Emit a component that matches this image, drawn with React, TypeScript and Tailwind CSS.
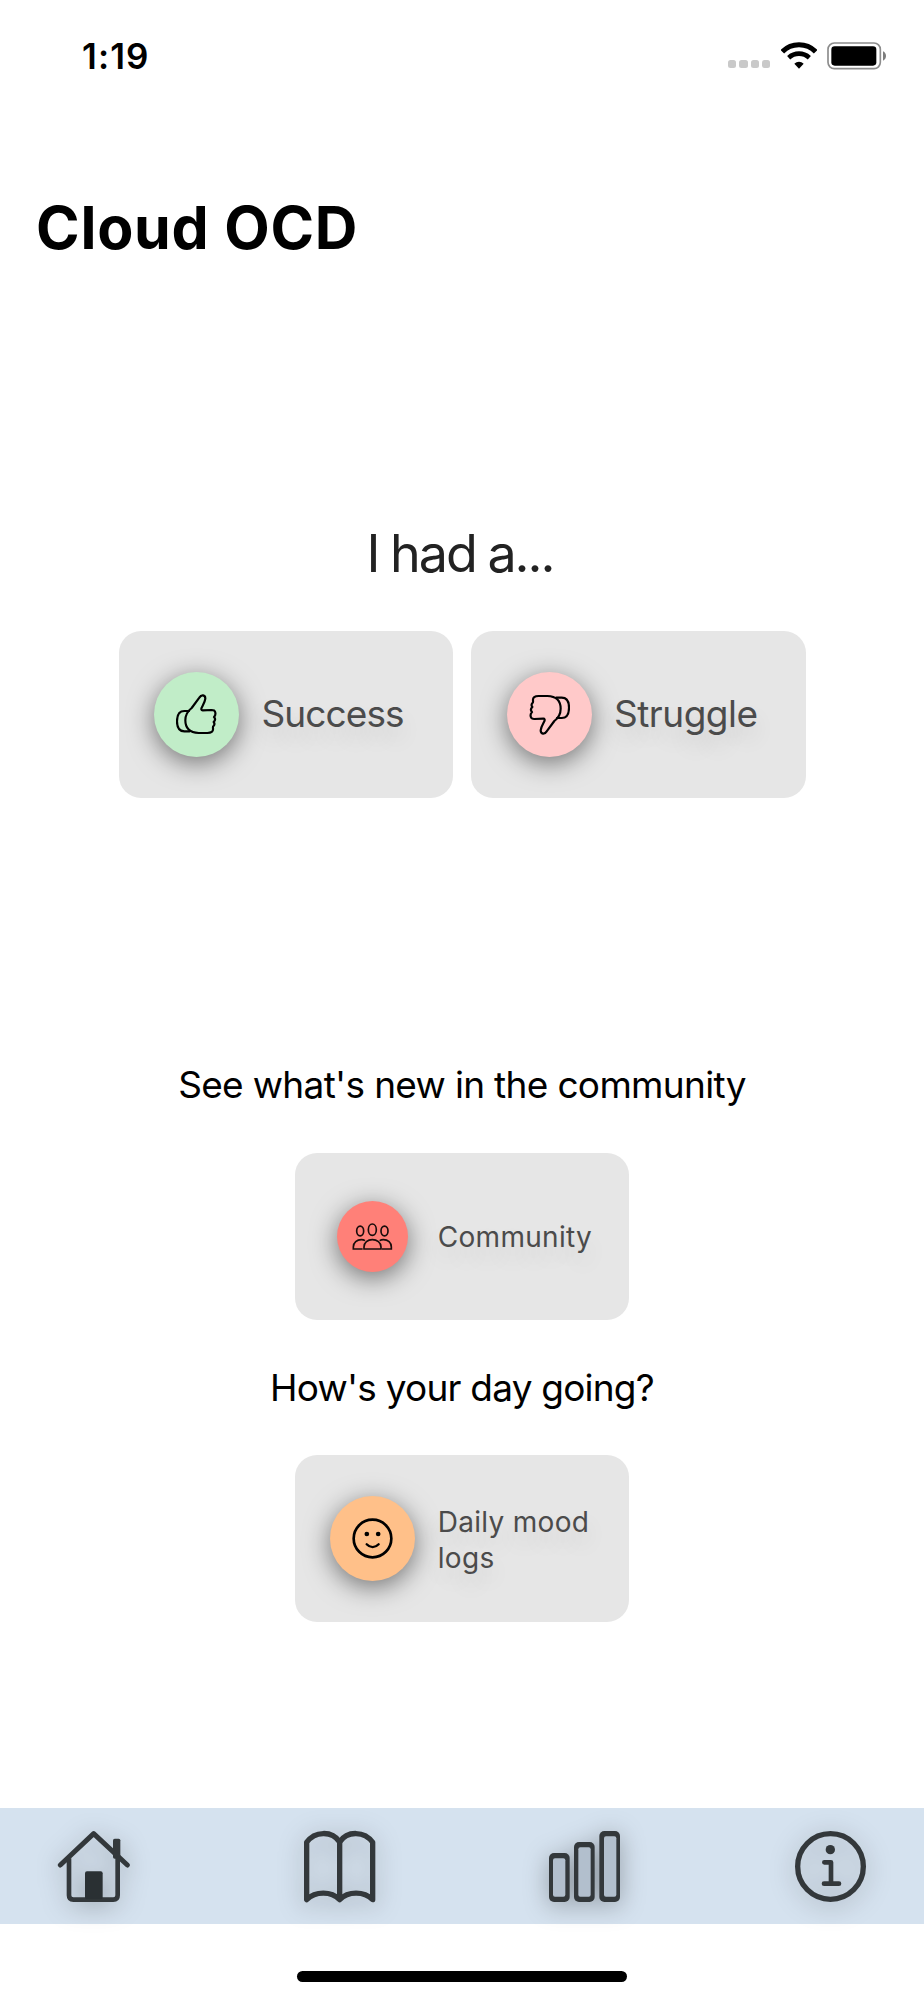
import type { ReactNode } from 'react';

const SignalDots = () => (
  <div className="flex gap-[3px] pt-[17px]">
    {[0, 1, 2, 3].map((dot) => (
      <span key={dot} className="h-[8px] w-[8.2px] rounded-[2.5px] bg-[#c9c9c9]" />
    ))}
  </div>
);

const WifiIcon = () => (
  <svg className="ml-[11px] h-[27px] w-[36px]" viewBox="0 0 108 81" fill="none">
    <path d="M4 29 C31 1 77 1 104 29" stroke="#000" strokeWidth="15" />
    <path d="M23 47 C41 31 67 31 85 47" stroke="#000" strokeWidth="14" />
    <path d="M54 80 L40 65 C48 57 60 57 68 65 Z" fill="#000" />
  </svg>
);

const BatteryIcon = () => (
  <svg className="ml-[10px] h-[28px] w-[60px]" viewBox="0 0 180 84">
    <rect x="3" y="3" width="157" height="77" rx="19" fill="none" stroke="#8c8c8c" strokeWidth="5" />
    <rect x="13" y="13" width="135" height="58" rx="10" fill="#000" />
    <path d="M168 28 C180 33 180 51 168 56 Z" fill="#7d7d7d" />
  </svg>
);

const ThumbIcon = ({ down = false }: { down?: boolean }) => (
  <svg
    className={down ? 'h-[41px] w-[41px] rotate-180' : 'h-[41px] w-[41px]'}
    viewBox="0 0 123 123"
    fill="none"
    stroke="#000"
    strokeWidth="6.5"
    strokeLinejoin="round"
    strokeLinecap="round"
  >
    <path d="M70 11 L47 42 C34 52 28 64 28 79 C28 103 41 116 68 117 L94 117 C106 117 112 113 111 104 C111 101 110 99 112 97 C116 93 116 88 113 84 C118 79 118 73 114 69 C119 64 119 58 117 53 C116 49 112 48 107 48 L80 49 C76 49 75 46 77 41 C81 33 87 24 88 14 C88 2 76 1 70 11 Z" />
    <path d="M39 51 L25 51 C11 51 3 63 3 82 C3 101 11 112 25 112 L41 112" />
  </svg>
);

const PeopleIcon = () => (
  <svg className="h-[27px] w-[41px]" viewBox="0 0 123 81" fill="none" stroke="#1a0d0c" strokeWidth="5">
    <ellipse cx="61" cy="20" rx="12" ry="17" />
    <ellipse cx="24.5" cy="24" rx="10.5" ry="14.5" />
    <ellipse cx="97.5" cy="24" rx="10.5" ry="14.5" />
    <path d="M36 78 V72 C36 59 47 50 61 50 C75 50 87 59 87 72 V78 Z" />
    <path d="M32 78 H4 V72 C4 59 15 50 28 50 C32 50 36 51 39 53" />
    <path d="M90 78 H118 V72 C118 59 108 50 94 50 C90 50 86 51 83 53" />
  </svg>
);

const SmileIcon = () => (
  <svg className="h-[41px] w-[41px]" viewBox="0 0 123 123" fill="none">
    <circle cx="61.5" cy="61.5" r="56.5" stroke="#000" strokeWidth="8" />
    <circle cx="44.5" cy="48" r="7" fill="#000" />
    <circle cx="78.5" cy="48" r="7" fill="#000" />
    <path d="M44 79 C54 90 70 90 80 79" stroke="#000" strokeWidth="7" strokeLinecap="round" />
  </svg>
);

const HomeIcon = () => (
  <svg className="h-[71px] w-[72px] overflow-visible" viewBox="0 0 216 213" fill="none" stroke="#33383b">
    <rect x="165" y="23" width="22" height="60" rx="5" fill="#33383b" stroke="none" />
    <path d="M7 102 L107 8 L208 102" strokeWidth="15" strokeLinecap="round" strokeLinejoin="round" />
    <path d="M33 82 V193 Q33 206 46 206 H166 Q179 206 179 193 V76" strokeWidth="14" />
    <rect x="81" y="121" width="53" height="84" rx="6" fill="#2a3033" stroke="none" />
  </svg>
);

const BookIcon = () => (
  <svg
    className="h-[71px] w-[72px] overflow-visible"
    viewBox="0 0 216 213"
    fill="none"
    stroke="#33383b"
    strokeWidth="16"
    strokeLinejoin="round"
  >
    <path d="M8 206 V34 C32 0 84 -2 107 33 C130 -2 182 0 206 34 V206 C180 180 132 180 107 206 C82 180 34 180 8 206 Z" />
    <path d="M107 33 V206" />
  </svg>
);

const BarsIcon = () => (
  <svg className="h-[71px] w-[72px] overflow-visible" viewBox="0 0 216 213" fill="#33383b">
    <rect x="0" y="66" width="62" height="147" rx="15" />
    <rect x="75" y="33" width="62" height="180" rx="15" />
    <rect x="151" y="0" width="62" height="213" rx="15" />
    <g fill="#b2bfcd">
      <rect x="12" y="82" width="37" height="115" rx="6" />
      <rect x="88" y="49" width="37" height="148" rx="6" />
      <rect x="165" y="16" width="37" height="181" rx="6" />
    </g>
  </svg>
);

const InfoIcon = () => (
  <svg className="h-[71px] w-[72px] overflow-visible" viewBox="0 0 216 213" fill="none" stroke="#33383b">
    <circle cx="106.5" cy="106.5" r="98.5" strokeWidth="16" />
    <circle cx="106" cy="56" r="14" fill="#33383b" stroke="none" />
    <path d="M88 94 H108 V157 M87 158 H132" strokeWidth="14" strokeLinecap="round" strokeLinejoin="round" />
  </svg>
);

type CardProps = {
  label: string;
  icon: ReactNode;
  circleClass: string;
  labelClass: string;
};

const Card = ({ label, icon, circleClass, labelClass }: CardProps) => (
  <button className="flex h-[167px] w-[334.5px] items-center rounded-[22px] bg-[#e6e6e6] text-left">
    <span
      className={`flex shrink-0 items-center justify-center rounded-full shadow-[0_6px_26px_rgba(0,0,0,0.5)] ${circleClass}`}
    >
      {icon}
    </span>
    <span className={`text-[#4b4b4b] [text-shadow:0_12px_22px_rgba(0,0,0,0.12)] ${labelClass}`}>{label}</span>
  </button>
);

const navItems = [
  { id: 'home', icon: <HomeIcon /> },
  { id: 'journal', icon: <BookIcon /> },
  { id: 'stats', icon: <BarsIcon /> },
  { id: 'info', icon: <InfoIcon /> },
];

export default function App() {
  return (
    <div className="flex h-[2000px] w-[924px] flex-col bg-white font-['Inter',sans-serif] text-black">
      {/* Status bar */}
      <div className="flex h-[111px] items-center justify-between pl-[82px] pr-[37px]">
        <span className="text-[35px] leading-[44px] font-semibold tracking-[1.1px]">1:19</span>
        <div className="flex items-center">
          <SignalDots />
          <WifiIcon />
          <BatteryIcon />
        </div>
      </div>

      <h1 className="mt-[81px] pl-[36px] text-[59px] leading-[72px] font-bold tracking-[0.75px]">Cloud OCD</h1>

      {/* Log entry */}
      <h2 className="mt-[260px] pr-[4px] text-center text-[52px] leading-[60px] tracking-[-2px] text-[#222222] [word-spacing:-1px]">
        I had a...
      </h2>
      <div className="mt-[47px] flex justify-center gap-[18px]">
        <Card
          label="Success"
          icon={<ThumbIcon />}
          circleClass="ml-[35.5px] h-[85px] w-[85px] bg-[#c1edc8]"
          labelClass="ml-[22.5px] pb-[2px] text-[37px] leading-[44px] tracking-[-0.9px]"
        />
        <Card
          label="Struggle"
          icon={<ThumbIcon down />}
          circleClass="ml-[35.5px] h-[85px] w-[85px] bg-[#ffc9c9]"
          labelClass="ml-[22.5px] pb-[2px] text-[37px] leading-[44px] tracking-[-0.5px]"
        />
      </div>

      {/* Community */}
      <p className="mt-[265px] text-center text-[37px] leading-[44px] tracking-[-0.67px]">
        See what's new in the community
      </p>
      <div className="mt-[46px] flex justify-center">
        <Card
          label="Community"
          icon={<PeopleIcon />}
          circleClass="ml-[42px] h-[71px] w-[71px] bg-[#ff8078]"
          labelClass="ml-[30px] text-[28px] leading-[36px] tracking-[0.3px]"
        />
      </div>

      {/* Mood */}
      <p className="mt-[46px] text-center text-[37px] leading-[44px] tracking-[-0.78px]">How's your day going?</p>
      <div className="mt-[45px] flex justify-center">
        <Card
          label="Daily mood logs"
          icon={<SmileIcon />}
          circleClass="ml-[35.5px] h-[85px] w-[85px] bg-[#ffc089]"
          labelClass="ml-[22.5px] w-[164px] pt-[2px] text-[28px] leading-[36px] tracking-[0.3px]"
        />
      </div>

      {/* Tab bar */}
      <nav className="mt-[186px] flex h-[116px] items-center justify-between bg-[#d5e2ef] pl-[58px] pr-[57px]">
        {navItems.map((item) => (
          <button key={item.id} className="drop-shadow-[0_4px_12px_rgba(0,0,0,0.3)]">
            {item.icon}
          </button>
        ))}
      </nav>
      <div className="mx-auto mt-[47px] h-[11px] w-[330px] rounded-full bg-black" />
    </div>
  );
}
